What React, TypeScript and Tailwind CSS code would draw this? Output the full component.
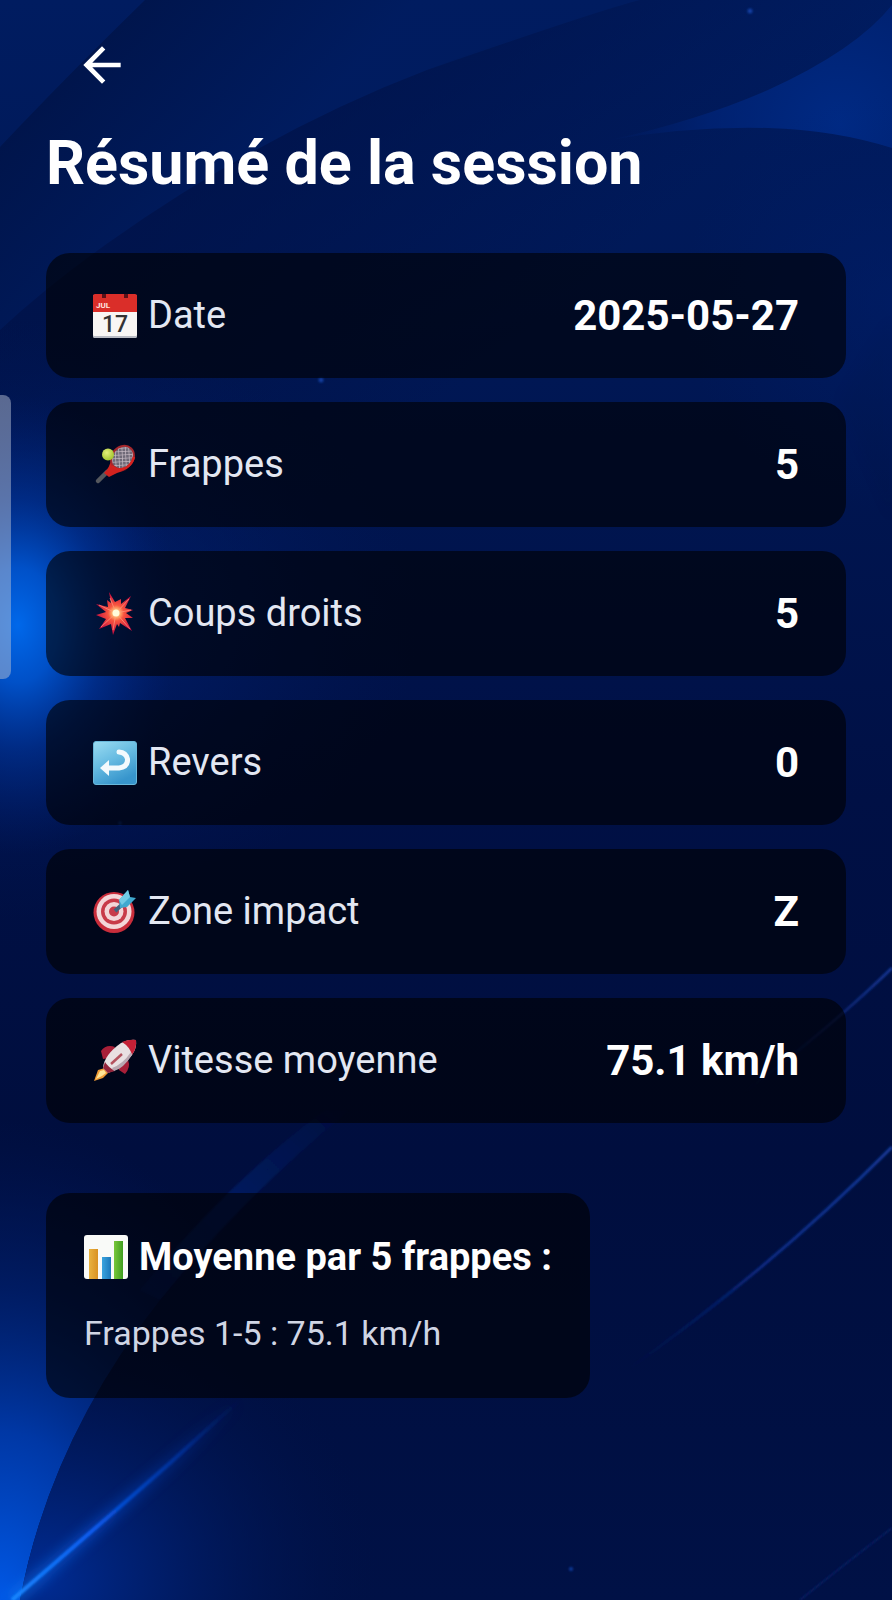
import type { ReactNode } from "react";
import { MdArrowBack } from "react-icons/md";

function Backdrop() {
  return (
    <svg
      className="absolute inset-0 h-full w-full"
      viewBox="0 0 892 1600"
      preserveAspectRatio="none"
      aria-hidden="true"
    >
      <defs>
        <linearGradient id="base" x1="0" y1="0" x2="0" y2="1">
          <stop offset="0" stopColor="#001c60" />
          <stop offset="0.2" stopColor="#001856" />
          <stop offset="0.5" stopColor="#001045" />
          <stop offset="0.72" stopColor="#000e3e" />
          <stop offset="1" stopColor="#001146" />
        </linearGradient>
        <linearGradient id="bandA" gradientUnits="userSpaceOnUse" x1="60" y1="60" x2="220" y2="210">
          <stop offset="0" stopColor="#001244" />
          <stop offset="1" stopColor="#001c60" />
        </linearGradient>
        <linearGradient id="bandB" gradientUnits="userSpaceOnUse" x1="190" y1="190" x2="400" y2="440">
          <stop offset="0" stopColor="#001044" stopOpacity="0.6" />
          <stop offset="1" stopColor="#001044" stopOpacity="0" />
        </linearGradient>
        <radialGradient id="lens" gradientUnits="userSpaceOnUse" cx="840" cy="125" r="260">
          <stop offset="0" stopColor="#002a84" />
          <stop offset="0.5" stopColor="#002478" stopOpacity="0.75" />
          <stop offset="1" stopColor="#001c64" stopOpacity="0" />
        </radialGradient>
        <radialGradient id="right" gradientUnits="userSpaceOnUse" cx="892" cy="300" r="210">
          <stop offset="0" stopColor="#002072" stopOpacity="0.8" />
          <stop offset="1" stopColor="#002072" stopOpacity="0" />
        </radialGradient>
        <radialGradient id="glow" gradientUnits="userSpaceOnUse" cx="0" cy="0" r="1" gradientTransform="translate(18 625) scale(160 230)">
          <stop offset="0" stopColor="#0068ea" />
          <stop offset="0.25" stopColor="#0056d2" stopOpacity="0.9" />
          <stop offset="0.55" stopColor="#003ba8" stopOpacity="0.5" />
          <stop offset="1" stopColor="#00227a" stopOpacity="0" />
        </radialGradient>
        <radialGradient id="glowWide" gradientUnits="userSpaceOnUse" cx="0" cy="0" r="1" gradientTransform="translate(0 620) scale(420 300)">
          <stop offset="0" stopColor="#002c90" stopOpacity="0.7" />
          <stop offset="1" stopColor="#001a60" stopOpacity="0" />
        </radialGradient>
        <radialGradient id="corner" gradientUnits="userSpaceOnUse" cx="0" cy="0" r="1" gradientTransform="translate(0 1600) scale(330 480)">
          <stop offset="0" stopColor="#0058e6" />
          <stop offset="0.35" stopColor="#003cb0" stopOpacity="0.9" />
          <stop offset="0.65" stopColor="#002274" stopOpacity="0.65" />
          <stop offset="1" stopColor="#00165a" stopOpacity="0" />
        </radialGradient>
        <radialGradient id="cornerInner" gradientUnits="userSpaceOnUse" cx="0" cy="0" r="1" gradientTransform="translate(40 1580) scale(340 290)">
          <stop offset="0" stopColor="#002c94" />
          <stop offset="0.4" stopColor="#001e6c" stopOpacity="0.8" />
          <stop offset="1" stopColor="#001248" stopOpacity="0" />
        </radialGradient>
        <linearGradient id="ray" gradientUnits="userSpaceOnUse" x1="10" y1="1600" x2="240" y2="1400">
          <stop offset="0" stopColor="#1688ff" />
          <stop offset="0.35" stopColor="#0a5cf0" />
          <stop offset="0.75" stopColor="#0038ac" stopOpacity="0.6" />
          <stop offset="1" stopColor="#002880" stopOpacity="0" />
        </linearGradient>
        <linearGradient id="streakMid" gradientUnits="userSpaceOnUse" x1="892" y1="1147" x2="630" y2="1370">
          <stop offset="0" stopColor="#153b9c" />
          <stop offset="0.5" stopColor="#0a2c88" />
          <stop offset="1" stopColor="#06206a" stopOpacity="0" />
        </linearGradient>
        <linearGradient id="streakTop" gradientUnits="userSpaceOnUse" x1="892" y1="968" x2="745" y2="1100">
          <stop offset="0" stopColor="#183a9c" />
          <stop offset="1" stopColor="#0a2470" stopOpacity="0" />
        </linearGradient>
        <linearGradient id="haze" gradientUnits="userSpaceOnUse" x1="350" y1="1100" x2="140" y2="1330">
          <stop offset="0" stopColor="#002070" stopOpacity="0" />
          <stop offset="0.5" stopColor="#002274" stopOpacity="0.6" />
          <stop offset="1" stopColor="#002478" stopOpacity="0.2" />
        </linearGradient>
        <filter id="soft" x="-20%" y="-20%" width="140%" height="140%">
          <feGaussianBlur stdDeviation="6" />
        </filter>
        <filter id="fine" x="-20%" y="-20%" width="140%" height="140%">
          <feGaussianBlur stdDeviation="0.8" />
        </filter>
      </defs>
      <rect width="892" height="1600" fill="url(#base)" />
      <path d="M145 0Q66 77 0 147V330Q46 287 108 243Q265 132 427 70Q525 30 640 0Z" fill="url(#bandA)" opacity="0.75" />
      <path d="M0 330Q46 287 108 243Q265 132 427 70Q600 10 640 0L892 0V620H0Z" fill="url(#bandB)" />
      <path d="M892 5Q856 50 768 90Q700 120 610 140Q690 126 768 128Q835 130 892 148Z" fill="url(#lens)" />
      <path d="M892 318Q872 345 840 400L892 520Z" fill="#00081f" opacity="0.06" filter="url(#soft)" />
      <rect x="640" y="90" width="252" height="430" fill="url(#right)" opacity="0.5" />
      <rect x="0" y="300" width="430" height="640" fill="url(#glowWide)" />
      <rect x="0" y="390" width="180" height="470" fill="url(#glow)" />
      <path d="M0 1090L350 1110Q245 1195 160 1300Q50 1440 20 1600H0Z" fill="url(#corner)" />
      <path d="M350 1110Q245 1195 160 1300L140 1290Q230 1180 325 1110Z" fill="url(#haze)" filter="url(#fine)" />
      <path d="M20 1600Q50 1440 160 1300L420 1260V1600Z" fill="url(#cornerInner)" />
      <path d="M12 1600Q105 1520 170 1463Q215 1422 240 1400" fill="none" stroke="url(#ray)" strokeWidth="14" opacity="0.4" filter="url(#soft)" />
      <path d="M12 1600Q105 1520 170 1463Q215 1422 240 1400" fill="none" stroke="url(#ray)" strokeWidth="4" filter="url(#fine)" />
      <path d="M892 968Q830 1028 745 1092" fill="none" stroke="url(#streakTop)" strokeWidth="2.5" filter="url(#fine)" />
      <path d="M892 1147Q770 1270 620 1375" fill="none" stroke="url(#streakMid)" strokeWidth="3" filter="url(#fine)" />
      <path d="M892 1528Q850 1560 800 1600" fill="none" stroke="#0b236a" strokeWidth="1.5" filter="url(#fine)" />
      <g fill="#1c4fc0" opacity="0.7" filter="url(#fine)">
        <circle cx="750" cy="11" r="2.5" />
        <circle cx="321" cy="380" r="2.5" />
        <circle cx="120" cy="823" r="1.5" />
        <circle cx="571" cy="1569" r="2" />
      </g>
    </svg>
  );
}

function Icon({ children }: { children: ReactNode }) {
  return (
    <svg className="h-11 w-11 shrink-0" viewBox="0 0 44 44" aria-hidden="true">
      {children}
    </svg>
  );
}

const calendar = (
  <Icon>
    <rect y="2" width="44" height="42" rx="1.5" fill="#b9bcc4" />
    <rect y="1" width="44" height="41" rx="1.5" fill="#f8f6f4" />
    <path d="M0 2q0-2 2-2h7v3h4V0h18v3h4V0h7q2 0 2 2v16H0Z" fill="#da2e29" />
    <path d="M9 0h4v4H9ZM31 0h4v4h-4Z" fill="#5a1018" />
    <text x="3" y="14" fontFamily="Roboto, sans-serif" fontSize="8" fontWeight="700" fill="#ffe5e0">JUL</text>
    <text x="22" y="38" textAnchor="middle" fontFamily="Roboto, sans-serif" fontSize="23" fontWeight="500" fill="#333333">17</text>
  </Icon>
);

const racket = (
  <Icon>
    <defs>
      <pattern id="strings" width="3.4" height="3.4" patternUnits="userSpaceOnUse" patternTransform="rotate(45)">
        <rect width="3.4" height="3.4" fill="#6f6a78" />
        <path d="M0 0H3.4M0 0V3.4" stroke="#c9bdc6" strokeWidth="1.3" />
      </pattern>
      <radialGradient id="ball" cx="0.4" cy="0.35" r="0.7">
        <stop offset="0" stopColor="#e5ef7a" />
        <stop offset="1" stopColor="#9fc32a" />
      </radialGradient>
    </defs>
    <path d="M5 38 14 29" stroke="#55585e" strokeWidth="4.5" strokeLinecap="round" />
    <path d="M11 30Q17 24 18 17Q21 29 33 27Q25 29 16 34Z" fill="#d2221f" />
    <ellipse cx="29.5" cy="14.5" rx="12.5" ry="10.5" transform="rotate(-48 29.5 14.5)" fill="url(#strings)" stroke="#a5272c" strokeWidth="2" />
    <path d="M19 23Q24 29 33 25Q39 21 41 14" fill="none" stroke="#d5221f" strokeWidth="2.5" />
    <circle cx="15" cy="11.5" r="6" fill="url(#ball)" />
  </Icon>
);

const burst = (
  <Icon>
    <defs>
      <radialGradient id="blast" gradientUnits="userSpaceOnUse" cx="23" cy="21" r="20">
        <stop offset="0" stopColor="#fffbd0" />
        <stop offset="0.16" stopColor="#ffc176" />
        <stop offset="0.4" stopColor="#f8553f" />
        <stop offset="1" stopColor="#c81040" />
      </radialGradient>
    </defs>
    <path d="M16 0 22 10 28 7 28 12 38 4 32 16 40 18 33 21 40 26 32 26 39 39 27 31 26 35 24 32 20 43 18 32 6 37 13 27 3 23 13 20 3 12 15 15 14 8 18 11Z" fill="url(#blast)" />
    <path d="M23 21 17 6M23 21 36 7M23 21 38 18M23 21 37 37M23 21 20 38M23 21 8 35M23 21 6 13" stroke="#ff9b80" strokeWidth="1" opacity="0.7" />
    <circle cx="23" cy="21" r="3.5" fill="#fffbdc" />
  </Icon>
);

const returnArrow = (
  <Icon>
    <defs>
      <linearGradient id="tile" x1="0" y1="0" x2="0.5" y2="1">
        <stop offset="0" stopColor="#9bdcf2" />
        <stop offset="0.5" stopColor="#68bce2" />
        <stop offset="1" stopColor="#3795cc" />
      </linearGradient>
    </defs>
    <rect x="0.5" y="0.5" width="43" height="43" rx="2.5" fill="url(#tile)" stroke="#69b8db" />
    <path d="M14 27H26Q35 26 34.5 18Q33 11.5 26 11" fill="none" stroke="#f3fafd" strokeWidth="5" strokeLinecap="round" />
    <path d="M7 27 16 19V35Z" fill="#f3fafd" />
  </Icon>
);

const target = (
  <Icon>
    <circle cx="21" cy="22.5" r="20.5" fill="#c92d3b" />
    <circle cx="21" cy="21.5" r="17.5" fill="#f3d6d8" />
    <circle cx="21" cy="21.5" r="13" fill="#c83b49" />
    <circle cx="21" cy="21.5" r="9.5" fill="#f3d6d8" />
    <circle cx="21" cy="21.5" r="5" fill="#c83b49" />
    <path d="M22 21 33 11" stroke="#40647e" strokeWidth="4" />
    <path d="M26 10 35 0 37 7 43 8 34 17 27 18Z" fill="#3fa9cf" />
    <path d="M29 15 37 7 35 0 26 10Z" fill="#72cbe5" />
  </Icon>
);

const rocket = (
  <Icon>
    <path d="M1 42 5 31 12 29 15 34 10 39Z" fill="#ef9b35" />
    <path d="M3 40 7 32 11 31 13 34 9 37Z" fill="#ffe596" />
    <path d="M22 8Q13 5 8 12L10 20 17 19ZM35 21Q38 28 32 35L26 31 25 27Z" fill="#a81f38" />
    <path d="M10 29Q11 16 28 4Q36 0 43 1Q44 9 39 16Q29 30 15 34Z" fill="#e9e0e2" />
    <path d="M29 3Q36 0 43 1Q44 9 39 16Q37 8 29 3Z" fill="#c42036" />
    <path d="M10 29 15 34 22 32Q15 28 12 23Z" fill="#94243b" />
    <path d="M39 16Q30 30 21 32L19 29Q30 25 38 13Z" fill="#b9a7b0" />
    <path d="M18 25 29 15" stroke="#b4525e" strokeWidth="2.5" />
  </Icon>
);

const chart = (
  <Icon>
    <defs>
      <linearGradient id="amber" x1="0" x2="1"><stop stopColor="#e9b23f" /><stop offset="1" stopColor="#d99122" /></linearGradient>
      <linearGradient id="azure" x1="0" x2="1"><stop stopColor="#3aa4df" /><stop offset="1" stopColor="#1c78ba" /></linearGradient>
      <linearGradient id="lime" x1="0" x2="1"><stop stopColor="#79c73b" /><stop offset="1" stopColor="#3f9d20" /></linearGradient>
    </defs>
    <rect width="44" height="44" rx="3" fill="#f9faf8" />
    <rect x="5" y="14" width="9" height="30" fill="url(#amber)" />
    <rect x="18" y="22" width="9" height="22" fill="url(#azure)" />
    <rect x="30" y="6" width="9" height="38" fill="url(#lime)" />
  </Icon>
);

const stats = [
  { icon: calendar, label: "Date", value: "2025-05-27" },
  { icon: racket, label: "Frappes", value: "5" },
  { icon: burst, label: "Coups droits", value: "5" },
  { icon: returnArrow, label: "Revers", value: "0" },
  { icon: target, label: "Zone impact", value: "Z" },
  { icon: rocket, label: "Vitesse moyenne", value: "75.1 km/h" },
];

export default function App() {
  return (
    <div className="relative isolate min-h-screen overflow-hidden bg-[#000f40] font-['Roboto',sans-serif] text-white">
      <Backdrop />
      <div className="absolute top-[395px] left-0 h-[284px] w-[11px] rounded-r-lg bg-[#b4bdd2]/50" />
      <main className="relative px-[46px] pt-[37px] pb-12">
        <button type="button" aria-label="Retour" className="ml-7 block">
          <MdArrowBack className="h-14 w-14" />
        </button>
        <h1 className="mt-8 text-[61px] leading-[76px] font-bold">Résumé de la session</h1>
        <dl className="mt-[52px] flex flex-col gap-6">
          {stats.map(({ icon, label, value }) => (
            <div key={label} className="flex items-center justify-between rounded-3xl bg-black/60 px-[47px] py-[38px]">
              <dt className="flex items-center gap-[11px] text-[38px] leading-[49px] text-[#e3e7f2]">
                {icon}
                {label}
              </dt>
              <dd className="text-[42px] leading-[49px] font-bold">{value}</dd>
            </div>
          ))}
        </dl>
        <section className="mt-[70px] w-fit rounded-3xl bg-black/60 px-[38px] pt-10 pb-10">
          <h2 className="flex items-center gap-[11px] text-[38px] leading-[48px] font-bold">
            {chart}
            Moyenne par 5 frappes :
          </h2>
          <p className="mt-7 text-[34px] leading-[49px] text-[#d0d5e4]">Frappes 1-5 : 75.1 km/h</p>
        </section>
      </main>
    </div>
  );
}
